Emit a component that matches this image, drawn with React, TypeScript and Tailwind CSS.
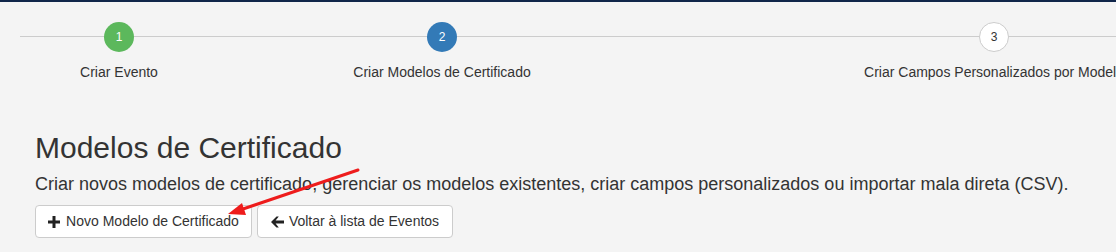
const steps = [
  { n: "1", label: "Criar Evento", width: "w-[198px]", circle: "bg-[#5cb85c] text-white" },
  { n: "2", label: "Criar Modelos de Certificado", width: "w-[448px]", circle: "bg-[#337ab7] text-white" },
  {
    n: "3",
    label: "Criar Campos Personalizados por Modelo",
    width: "w-[656px]",
    circle: "bg-white text-[#333] border border-[#ccc]",
  },
];

function PlusGlyph() {
  return (
    <svg width="12" height="12" viewBox="0 0 12 12" className="shrink-0">
      <path d="M4.5 0h3v4.5H12v3H7.5V12h-3V7.5H0v-3h4.5z" fill="#222" />
    </svg>
  );
}

function ArrowGlyph() {
  return (
    <svg width="13" height="12" viewBox="0 0 13 12" className="shrink-0">
      <path d="M0 6 5.5 0.5h2.3L4.6 4.5H13v3H4.6l3.2 4H5.5z" fill="#222" />
    </svg>
  );
}

export default function App() {
  return (
    <div className="relative h-[252px] w-[1116px] overflow-hidden bg-[#f4f4f4] font-['Liberation_Sans',Arial,sans-serif] text-[#333]">
      <div className="h-[2px] bg-[#10264a]" />

      {/* wizard */}
      <div className="relative ml-[20px] mt-[20px] flex">
        <div className="absolute left-0 right-0 top-[14px] h-px bg-[#cccccc]" />
        {steps.map((step) => (
          <div key={step.n} className={`relative flex shrink-0 flex-col items-center ${step.width}`}>
            <div
              className={`flex h-[30px] w-[30px] items-center justify-center rounded-full text-[12px] ${step.circle}`}
            >
              {step.n}
            </div>
            <div className="mt-[10px] whitespace-nowrap text-[14px] leading-5 text-[#333]">{step.label}</div>
          </div>
        ))}
      </div>

      <div className="px-[35px] pt-[49px]">
        <h1 className="text-[30px] leading-[33px] text-[#333]">Modelos de Certificado</h1>
        <p className="mt-[8px] text-[18px] leading-6 text-[#333]">
          Criar novos modelos de certificado, gerenciar os modelos existentes, criar campos personalizados ou importar
          mala direta (CSV).
        </p>
        <div className="mt-[9px] flex gap-[5px]">
          <button
            type="button"
            className="flex h-[33px] w-[217px] items-center justify-center gap-[6px] rounded-[4px] border border-[#cccccc] bg-white text-[14px] text-[#333]"
          >
            <PlusGlyph />
            Novo Modelo de Certificado
          </button>
          <button
            type="button"
            className="flex h-[33px] w-[196px] items-center justify-center gap-[5px] rounded-[4px] border border-[#cccccc] bg-white text-[14px] text-[#333]"
          >
            <ArrowGlyph />
            Voltar à lista de Eventos
          </button>
        </div>
      </div>

      {/* annotation arrow */}
      <svg className="pointer-events-none absolute left-0 top-0" width="1116" height="252">
        <line x1="358" y1="170" x2="240" y2="210" stroke="#ee1c1c" strokeWidth="3" strokeLinecap="round" />
        <polygon points="228,214 242,203 246,215" fill="#ee1c1c" />
      </svg>
    </div>
  );
}
